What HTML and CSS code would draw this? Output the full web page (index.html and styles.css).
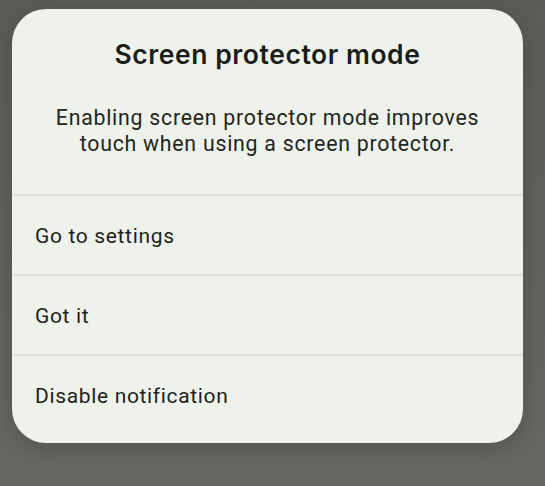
FILE: index.html
```html
<!DOCTYPE html>
<html>
<head>
<meta charset="utf-8">
<link rel="stylesheet" href="styles.css">
</head>
<body>
<div class="screen">
  <div class="dialog">
    <div class="header">
      <h1 class="title">Screen protector mode</h1>
      <p class="message">Enabling screen protector mode improves touch when using a screen protector.</p>
    </div>
    <div class="options">
      <div class="option">Go to settings</div>
      <div class="option">Got it</div>
      <div class="option">Disable notification</div>
    </div>
  </div>
</div>
</body>
</html>
```
FILE: styles.css
```css
html, body {
  margin: 0;
  padding: 0;
}
body {
  width: 545px;
  height: 486px;
  overflow: hidden;
  background: linear-gradient(#5a5c57, #666863);
  font-family: Roboto, "Liberation Sans", sans-serif;
}
.screen {
  padding: 9px 0 0 12px;
}
.dialog {
  width: 511px;
  height: 434px;
  box-sizing: border-box;
  background: #eff2ea;
  border-radius: 34px;
  box-shadow: 0 6px 24px rgba(0, 0, 0, 0.18);
  overflow: hidden;
}
.header {
  height: 185px;
  box-sizing: border-box;
  padding: 28px 28px 0;
  text-align: center;
}
.title {
  margin: 0;
  font-family: Inter, "Open Sans", sans-serif;
  font-weight: 600;
  font-size: 26.5px;
  line-height: 34px;
  color: #1b1d19;
  letter-spacing: 0.55px;
}
.message {
  margin: 34px 0 0;
  font-size: 21.3px;
  line-height: 26px;
  letter-spacing: 0.75px;
  color: #232520;
}
.option {
  height: 78px;
  border-top: 2px solid #dcdfd7;
  display: flex;
  align-items: center;
  padding: 2px 0 0 23px;
  box-sizing: border-box;
  height: 80px;
  font-size: 21px;
  letter-spacing: 0.66px;
  color: #1d1f1b;
}
```
